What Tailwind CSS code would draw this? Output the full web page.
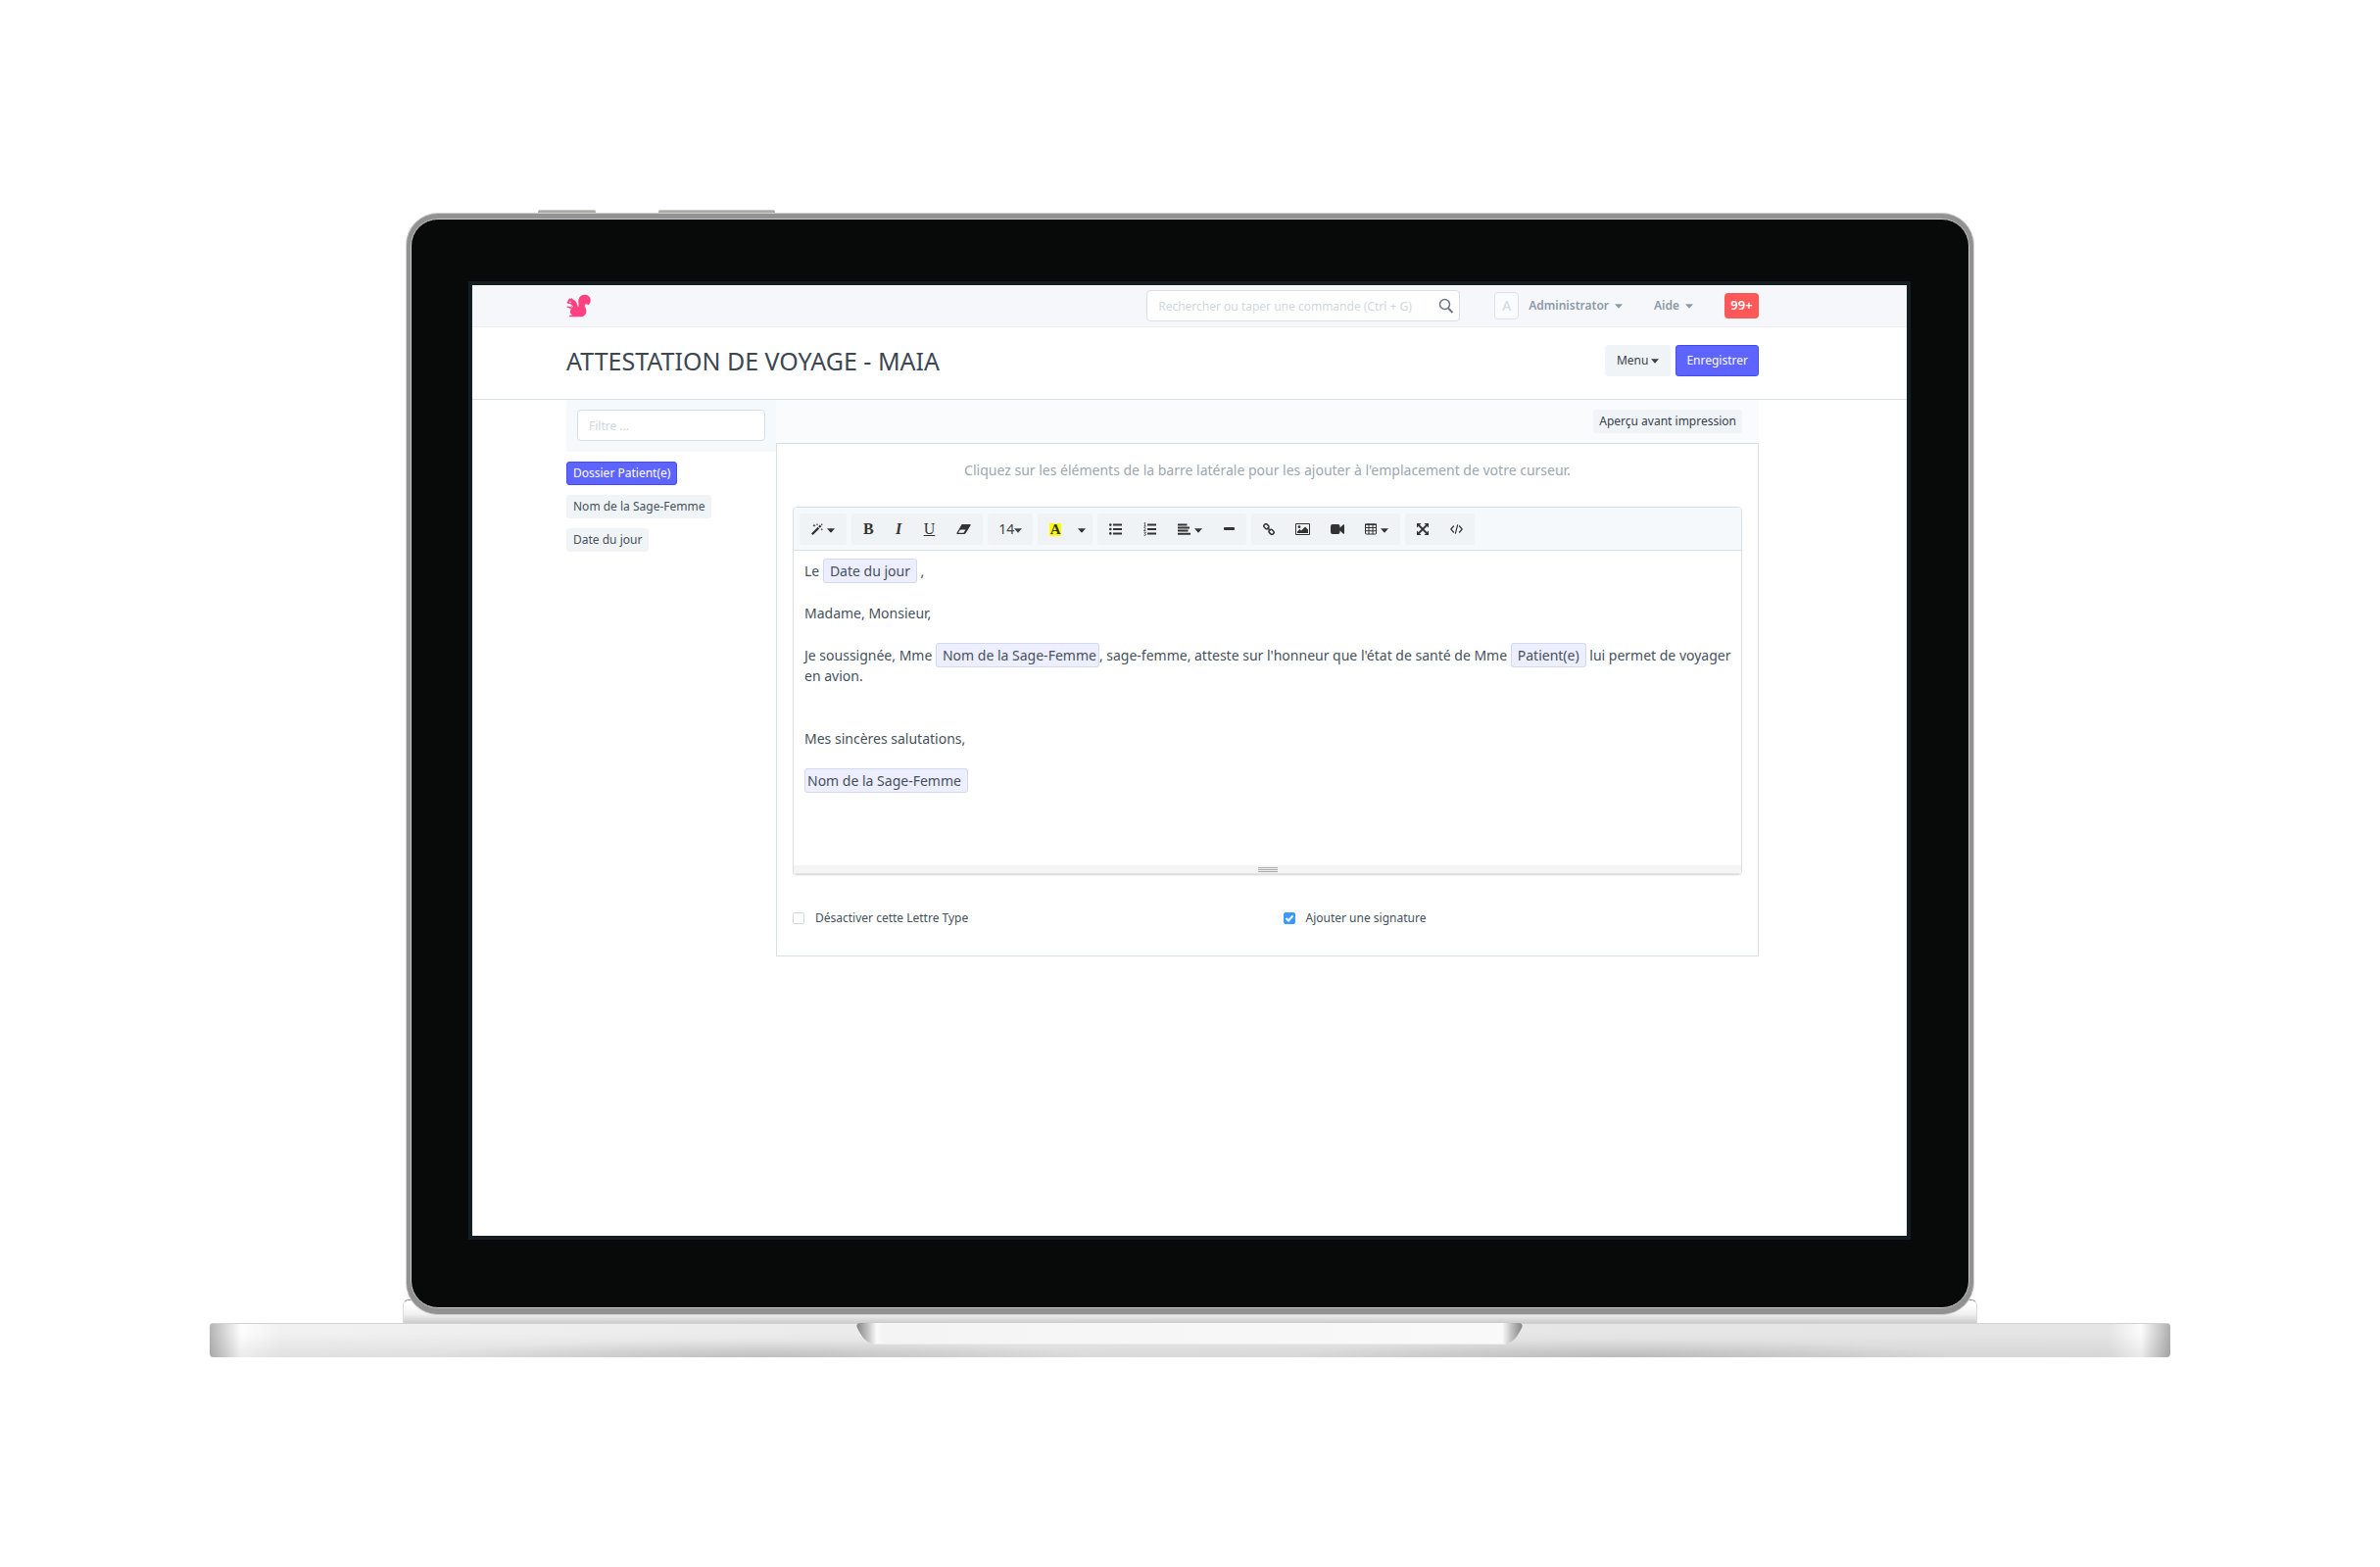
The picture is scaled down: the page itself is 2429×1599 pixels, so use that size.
<!DOCTYPE html>
<html lang="fr">
<head>
  <meta charset="UTF-8" />
  <meta name="viewport" content="width=device-width, initial-scale=1.0" />
  <title>Attestation de voyage - Maia</title>
  <script src="https://cdn.jsdelivr.net/npm/@tailwindcss/browser@4"></script>
</head>
<body class="bg-white min-h-screen flex items-center justify-center font-['Noto_Sans',sans-serif] text-[#46515c]">

  <!-- Shared icons -->
  <svg class="hidden">
    <symbol id="caret" viewBox="0 0 8 5"><path d="M0 0.3h8L4 4.8z" fill="currentColor" /></symbol>
  </svg>

  <!-- Laptop -->
  <div class="w-full max-w-[2001px]">

    <!-- Buttons on the lid's edge -->
    <div class="flex h-[3px] ml-[335px]">
      <div class="w-[59px] bg-[#a9aaa5] border-t border-[#c8c8c8] rounded-t-xs"></div>
      <div class="w-[119px] ml-16 bg-[#a9aaa5] border-t border-[#c8c8c8] rounded-t-xs"></div>
    </div>

    <!-- Lid -->
    <div class="relative z-10 mx-[200px] rounded-[33px] border border-[#d0d0d0] bg-[#929292] px-1 pt-[5px] pb-[6px]">
      <div class="rounded-[28px] border border-[#c9c9c9] bg-[#080a09] pl-[58px] pr-[59px] pt-[63px] pb-[69px]">
        <div class="border-4 border-[#141d22] bg-white aspect-[1472/978] overflow-hidden">

          <!-- Navbar -->
          <header class="flex items-center h-[43px] pl-24 pr-[151px] bg-[#f5f7fb] border-b border-[#ebeef1] text-xs font-semibold text-[#8d99a6]">
            <a href="#" aria-label="Accueil">
              <svg class="w-[25px] h-6" viewBox="0 0 76 71">
                <path fill="#ff4081" d="M10 12l3 3 3-4 3 4C28 18 32 25 34 32l2 8 2-4C39 30 36 24 38 16C40 6 48 1 57 1C68 1 76 9 75 19C75 25 73 30 68 33C64 29 58 29 57 33C56 39 62 43 62 52C62 61 55 70 44 70L9 70C8 66 10 64 19 64C11 60 10 52 15 46L4 41C0 40 0 37 4 37L14 39C17 37 17 33 14 31L6 29C1 28 1 25 4 22C5 18 8 15 10 12z" />
                <circle cx="12" cy="24" r="2.5" fill="#fff" />
                <path d="M14 33l6 4-5 6" fill="none" stroke="#fff" stroke-width="2" />
              </svg>
            </a>
            <div class="relative ml-auto">
              <input type="text" aria-label="Rechercher" placeholder="Rechercher ou taper une commande (Ctrl + G)" class="w-80 h-8 px-[11px] bg-white border border-[#d8dfe5] rounded-[4px] font-normal placeholder:text-[#d1d8dd] focus:outline-none" />
              <svg class="absolute right-[6px] top-2 w-4 h-4 text-[#6c7680]" viewBox="0 0 16 16" fill="none" stroke="currentColor" stroke-width="1.5">
                <circle cx="6.5" cy="6.5" r="5" />
                <path d="M10 10.5l4.5 4.5" stroke-width="2" />
              </svg>
            </div>
            <span class="flex items-center justify-center w-[25px] h-7 ml-[35px] bg-[#fafbfc] border border-[#dde2e6] rounded-[4px] text-sm font-normal text-[#d1d8dd]">A</span>
            <button class="flex items-center ml-[10px]">Administrator <svg class="w-2 h-[5px] ml-[6px]"><use href="#caret" /></svg></button>
            <button class="flex items-center ml-8">Aide <svg class="w-2 h-[5px] ml-[6px]"><use href="#caret" /></svg></button>
            <button class="w-[35px] h-[26px] ml-8 bg-[#ff5858] rounded-[4px] text-[13px] text-white">99+</button>
          </header>

          <!-- Page head -->
          <div class="flex items-start h-[74px] pt-[18px] pl-24 pr-[151px] border-b border-[#d8dfe5]">
            <h1 class="text-[25px] leading-8 text-[#3c4752]">ATTESTATION DE VOYAGE - MAIA</h1>
            <button class="flex items-center h-8 ml-auto px-3 bg-[#f0f4f7] rounded-[3px] text-xs text-[#36414c]">Menu <svg class="w-2 h-[5px] ml-[3px]"><use href="#caret" /></svg></button>
            <button class="h-8 ml-[5px] px-[10px] bg-[#5e64ff] border border-[#444bff] rounded-[3px] text-xs text-white">Enregistrer</button>
          </div>

          <div class="flex items-start pl-24 pr-[151px]">

            <!-- Sidebar -->
            <aside class="w-[214px] shrink-0 text-xs">
              <div class="px-[11px] pt-[10px] pb-[11px] bg-[#f5f9fc]">
                <input type="text" aria-label="Filtre" placeholder="Filtre ..." class="block w-full h-8 px-[11px] bg-white border border-[#d8dfe5] rounded-[4px] placeholder:text-[#d1d8dd] focus:outline-none" />
              </div>
              <div class="flex flex-col items-start gap-[10px] mt-[10px]">
                <button class="h-6 px-[6px] bg-[#5e64ff] border border-[#444bff] rounded-[3px] text-white">Dossier Patient(e)</button>
                <button class="h-6 px-[7px] bg-[#f0f4f7] rounded-[3px]">Nom de la Sage-Femme</button>
                <button class="h-6 px-[7px] bg-[#f0f4f7] rounded-[3px]">Date du jour</button>
              </div>
            </aside>

            <main class="flex-1 min-w-0">
              <div class="flex justify-end h-11 pt-[10px] pr-[17px] bg-[#fafbfd]">
                <button class="h-6 px-[6px] bg-[#f0f4f7] rounded-[3px] text-xs text-[#36414c]">Aperçu avant impression</button>
              </div>

              <div class="px-4 pt-4 pb-7 border border-[#d8dfe5]">
                <p class="mb-[27px] text-center text-sm leading-[21px] text-[#9ca7b2]">Cliquez sur les éléments de la barre latérale pour les ajouter à l'emplacement de votre curseur.</p>

                <!-- Editor -->
                <div class="border border-[#d8dfe5] rounded-[4px] overflow-hidden shadow-[0_1px_1px_#0000000d]">
                  <div class="flex gap-[5px] px-[6px] pt-[6px] pb-[5px] bg-[#f5f9fc] border-b border-[#d8dfe5] text-[#333]">
                    <div class="flex items-center h-8 px-3 bg-[#f0f3f5] rounded-[3px]">
                      <button class="flex items-center gap-1" aria-label="Style">
                        <svg class="w-3 h-3" viewBox="0 0 12 12"><path fill="currentColor" d="M0 10.4L6.600 3.800l1.600 1.600L1.600 12zM7.200 3.200L8.800 1.600 10.400 3.200 8.800 4.800zM3 .6l.5 1.100 1.100.5-1.100.5L3 3.800l-.5-1.100L1.400 2.200l1.100-.5zM6 0l.4.8.8.4-.8.4L6 2.400l-.4-.8-.8-.4.8-.4zM10.800 0l.4.800.8.4-.8.4-.4.8-.4-.8-.8-.4.8-.4zM10.800 5l.4.8.8.4-.8.4-.4.8-.4-.8-.8-.4.8-.4z" /></svg>
                        <svg class="w-2 h-[5px] mt-[2px]"><use href="#caret" /></svg>
                      </button>
                    </div>
                    <div class="flex items-center gap-[22px] h-8 px-3 bg-[#f0f3f5] rounded-[3px] font-['Liberation_Serif',serif] text-base">
                      <button class="font-bold">B</button>
                      <button class="w-[7px] font-bold italic">I</button>
                      <button class="underline">U</button>
                      <button aria-label="Effacer la mise en forme"><svg class="w-[15px] h-[10px]" viewBox="0 0 15 10"><path fill="currentColor" d="M6 0h8q1 0 .6 1L10 8.500Q9 10 8 10H1Q0 10 .4 9L5 1Q5.400 0 6 0zM4 5.500L1.900 8.800H7.400L9.500 5.500z" fill-rule="evenodd" /></svg></button>
                    </div>
                    <div class="flex items-center h-8 px-[11px] bg-[#f0f3f5] rounded-[3px]">
                      <button class="flex items-center text-sm text-[#444]">14<svg class="w-2 h-[5px] mt-[2px]"><use href="#caret" /></svg></button>
                    </div>
                    <div class="flex items-center gap-[17px] h-8 pl-3 pr-[7px] bg-[#f0f3f5] rounded-[3px]">
                      <button class="w-3 h-[13px] bg-[#ffff00] font-['Liberation_Serif',serif] text-[15px] leading-[13px] font-bold">A</button>
                      <button aria-label="Couleurs"><svg class="w-2 h-[5px] mt-[2px]"><use href="#caret" /></svg></button>
                    </div>
                    <div class="flex items-center gap-[22px] h-8 px-3 bg-[#f0f3f5] rounded-[3px]">
                      <button aria-label="Liste à puces"><svg class="w-[13px] h-3" viewBox="0 0 13 12" fill="currentColor"><path d="M4 .6h9v2H4zM4 5h9v2H4zM4 9.400h9v2H4z" /><circle cx="1.300" cy="1.600" r="1.300" /><circle cx="1.300" cy="6" r="1.300" /><circle cx="1.300" cy="10.400" r="1.300" /></svg></button>
                      <button aria-label="Liste numérotée"><svg class="w-[13px] h-[14px]" viewBox="0 0 13 14" fill="currentColor"><path d="M4 1.600h9v2H4zM4 6h9v2H4zM4 10.400h9v2H4z" /><path d="M.6 1l1-.6V4M.4 4h2.200M.4 5.700q2-.6 1.700.8L.5 8.500h2M.4 10.200h2L1.400 11.500q1.500.3.8 1.500-.8.700-1.800.1" fill="none" stroke="currentColor" stroke-width=".8" /></svg></button>
                      <button class="flex items-center gap-1" aria-label="Alignement">
                        <svg class="w-[13px] h-3" viewBox="0 0 13 12" fill="currentColor"><path d="M0 .4h9.500v2H0zM0 3.500h12v2H0zM0 6.600h10.500v2H0zM0 9.700h13v2H0z" /></svg>
                        <svg class="w-2 h-[5px] mt-[2px]"><use href="#caret" /></svg>
                      </button>
                      <button aria-label="Ligne horizontale"><svg class="w-[11px] h-3" viewBox="0 0 11 12"><rect y="4" width="11" height="3" rx=".8" fill="currentColor" /></svg></button>
                    </div>
                    <div class="flex items-center gap-[21px] h-8 px-3 bg-[#f0f3f5] rounded-[3px]">
                      <button aria-label="Lien"><svg class="w-3 h-3" viewBox="0 0 12 12" fill="none" stroke="currentColor" stroke-width="1.500"><rect x="-2.600" y="-2" width="5.200" height="4" rx="1.800" transform="translate(3.400 3.200) rotate(45)" /><rect x="-2.600" y="-2" width="5.200" height="4" rx="1.800" transform="translate(8.600 8.800) rotate(45)" /><path d="M4.500 4.500l3 3" /></svg></button>
                      <button aria-label="Image"><svg class="w-[15px] h-3" viewBox="0 0 15 12" fill="currentColor"><path fill-rule="evenodd" d="M1 0h13q1 0 1 1v10q0 1-1 1H1q-1 0-1-1V1Q0 0 1 0zM1 1v10h13V1z" /><circle cx="4" cy="3.700" r="1.400" /><path d="M2 10V8.500L4.500 6 6 7.500 10 3.500l3 3V10z" /></svg></button>
                      <button aria-label="Vidéo"><svg class="w-[14px] h-[10px]" viewBox="0 0 14 10" fill="currentColor"><path d="M2 0h5.500q2 0 2 2v1.500L13 .3q1-.4 1 .6v8.200q0 1-1 .6L9.500 6.500V8q0 2-2 2H2Q0 10 0 8V2Q0 0 2 0z" /></svg></button>
                      <button class="flex items-center gap-1" aria-label="Tableau">
                        <svg class="w-3 h-3" viewBox="0 0 12 12" fill="none" stroke="currentColor"><rect x=".5" y="1" width="11" height="10" rx="1" /><path d="M4 1v10M8 1v10M0 4.500h12M0 7.700h12" /><path d="M0 1.300h12" stroke-width="1.500" /></svg>
                        <svg class="w-2 h-[5px] mt-[2px]"><use href="#caret" /></svg>
                      </button>
                    </div>
                    <div class="flex items-center gap-[22px] h-8 px-3 bg-[#f0f3f5] rounded-[3px]">
                      <button aria-label="Plein écran"><svg class="w-3 h-3" viewBox="0 0 12 12" fill="currentColor"><path d="M0 0h4.500L0 4.500zM12 0v4.500L7.500 0zM0 12V7.500L4.500 12zM12 12H7.500L12 7.500z" /><path d="M2 2l8 8M10 2l-8 8" stroke="currentColor" stroke-width="1.800" /></svg></button>
                      <button aria-label="Code source"><svg class="w-[13px] h-[10px]" viewBox="0 0 13 10" fill="none" stroke="currentColor" stroke-width="1.200"><path d="M3.800 1.500L.8 5l3 3.500M9.200 1.500l3 3.500-3 3.500M7.700.3l-2.400 9.400" /></svg></button>
                    </div>
                  </div>

                  <div class="min-h-[321px] pt-[10px] pl-[11px] pr-1 text-sm leading-[21px]" contenteditable="true">
                    <p class="mb-[22px]">Le <span class="py-[2px] px-[6px] bg-[#edeeff] border border-[#d3dae8] rounded-[3px]">Date du jour</span> ,</p>
                    <p class="mb-[22px]">Madame, Monsieur,</p>
                    <p class="mb-[22px]">Je soussignée, Mme <span class="py-[2px] pl-[6px] pr-[2px] bg-[#edeeff] border border-[#d3dae8] rounded-[3px]">Nom de la Sage-Femme</span>, sage-femme, atteste sur l'honneur que l'état de santé de Mme <span class="py-[2px] px-[6px] bg-[#edeeff] border border-[#d3dae8] rounded-[3px]">Patient(e)</span> lui permet de voyager en avion.</p>
                    <p class="mb-[22px]"><br />Mes sincères salutations,</p>
                    <p><span class="py-[2px] pl-[2px] pr-[6px] bg-[#edeeff] border border-[#d3dae8] rounded-[3px]">Nom de la Sage-Femme</span></p>
                  </div>

                  <!-- Resize bar -->
                  <div class="flex flex-col items-center gap-px h-[9px] pt-[2px] bg-[#f4f4f4] border-b border-[#dfe3e6]">
                    <div class="w-5 h-px bg-[#a9a9a9]"></div>
                    <div class="w-5 h-px bg-[#a9a9a9]"></div>
                    <div class="w-5 h-px bg-[#a9a9a9]"></div>
                  </div>
                </div>

                <div class="grid grid-cols-2 gap-8 mt-[33px] text-xs leading-[21px]">
                  <label class="flex items-center">
                    <input type="checkbox" class="appearance-none w-3 h-3 mr-[11px] bg-white border border-[#d1d8dd] rounded-[2px] checked:bg-[#3b99fc]" />
                    Désactiver cette Lettre Type
                  </label>
                  <label class="relative flex items-center">
                    <input type="checkbox" checked class="appearance-none w-3 h-3 mr-[11px] bg-white border border-[#d1d8dd] rounded-[2px] checked:bg-[#3b99fc] checked:border-[#3b99fc]" />
                    <svg class="absolute left-0 w-3 h-3 pointer-events-none" viewBox="0 0 12 12" fill="none" stroke="#fff" stroke-width="2"><path d="M2.500 6l2.500 2.500L9.500 3.500" /></svg>
                    Ajouter une signature
                  </label>
                </div>
              </div>
            </main>
          </div>
        </div>
      </div>
    </div>

    <!-- Hinge -->
    <div class="h-6 mx-[197px] -mt-4 rounded-t-[6px] border border-b-0 border-t-[#8c8c8c] border-x-[#dcdcdc] bg-linear-to-b from-white from-20% via-[#f1f1f1] via-60% to-[#cccccc]"></div>

    <!-- Base -->
    <svg class="block w-full h-[35px]" viewBox="0 0 2001 35" preserveAspectRatio="none">
      <defs>
        <linearGradient id="body">
          <stop offset="0" stop-color="#b4b4b4" />
          <stop offset=".008" stop-color="#d8d8d8" />
          <stop offset=".016" stop-color="#fdfdfd" />
          <stop offset=".036" stop-color="#f1f1f1" />
          <stop offset=".3" stop-color="#ebebeb" />
          <stop offset=".7" stop-color="#e6e6e6" />
          <stop offset=".968" stop-color="#e5e5e5" />
          <stop offset=".985" stop-color="#fbfbfb" />
          <stop offset="1" stop-color="#aeaeae" />
        </linearGradient>
        <linearGradient id="shade" x2="0" y2="1">
          <stop offset=".3" stop-color="#000" stop-opacity="0" />
          <stop offset="1" stop-color="#000" stop-opacity=".07" />
        </linearGradient>
        <radialGradient id="shadow">
          <stop offset="0" stop-color="#000" stop-opacity=".13" />
          <stop offset="1" stop-color="#000" stop-opacity="0" />
        </radialGradient>
        <linearGradient id="notch">
          <stop offset="0" stop-color="#858585" />
          <stop offset=".015" stop-color="#bcbcbc" />
          <stop offset=".03" stop-color="#fafafa" />
          <stop offset=".04" stop-color="#f4f4f4" />
          <stop offset=".96" stop-color="#f9f9f9" />
          <stop offset=".97" stop-color="#fafafa" />
          <stop offset=".985" stop-color="#bcbcbc" />
          <stop offset="1" stop-color="#858585" />
        </linearGradient>
      </defs>
      <rect width="2001" height="35" rx="4" fill="url(#body)" />
      <rect width="2001" height="35" rx="4" fill="url(#shade)" />
      <ellipse cx="560" cy="35" rx="340" ry="18" fill="url(#shadow)" />
      <ellipse cx="1440" cy="35" rx="340" ry="18" fill="url(#shadow)" />
      <path d="M3 .5h1995" stroke="#d2d2d2" />
      <path d="M663 0h674q4 1 2 5c-5 10-9 16-19 16.500H680c-10-.5-14-6.500-19-16.500q-2-4 2-5z" fill="url(#notch)" />
      <path d="M678 21.500h644" stroke="#ececec" />
    </svg>
  </div>

</body>
</html>
